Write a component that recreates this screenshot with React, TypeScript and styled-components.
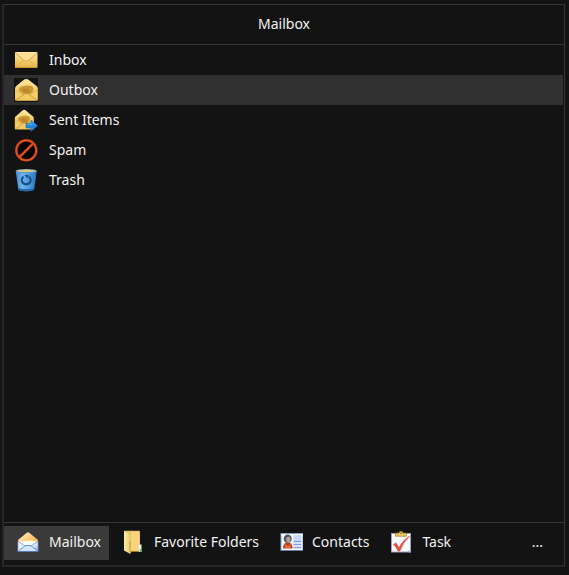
import React, { useState } from "react";
import styled, { createGlobalStyle } from "styled-components";

const GlobalStyle = createGlobalStyle`
  * { box-sizing: border-box; }
  body {
    margin: 0;
    background: #131313;
    color: #f2f2f2;
    font: 14px/20px "Noto Sans", "Open Sans", sans-serif;
  }
  button { font: inherit; color: inherit; border: 0; cursor: default; }
`;

const Page = styled.div`
  display: flex;
  min-height: 100vh;
  padding: 4px 4px 8px 2px;
`;

const Panel = styled.main`
  display: flex;
  flex: 1;
  flex-direction: column;
  min-width: 0;
  border: solid #363636;
  border-width: 1px 1px 2px 2px;
  border-left-color: #262626;
  border-bottom-color: #262626;
`;

const Header = styled.header`
  display: flex;
  align-items: center;
  justify-content: center;
  height: 40px;
  padding-bottom: 2px;
  border-bottom: 1px solid #363636;
`;

const Title = styled.h1`
  margin: 0;
  font-size: 14px;
  font-weight: 400;
  line-height: 20px;
`;

const FolderList = styled.ul`
  flex: 1;
  margin: 0;
  padding: 0 1px 0 0;
  list-style: none;
`;

const FolderButton = styled.button<{ $selected: boolean }>`
  display: flex;
  align-items: center;
  gap: 11px;
  width: 100%;
  height: 30px;
  padding: 0 10px;
  text-align: left;
  background: ${(p) => (p.$selected ? "#303030" : "transparent")};
`;

const IconTile = styled.span`
  display: flex;
  width: 24px;
  height: 24px;
  background: #131313;
`;

const Footer = styled.nav`
  display: flex;
  align-items: center;
  height: 43px;
  padding-bottom: 2px;
  border-top: 1px solid #363636;
`;

const TabButton = styled.button<{ $selected: boolean }>`
  display: flex;
  align-items: center;
  gap: 9px;
  height: 34px;
  padding: 0 8px 2px 12px;
  white-space: nowrap;
  background: ${(p) => (p.$selected ? "#3a3a3a" : "transparent")};
`;

const MoreButton = styled.button`
  height: 34px;
  margin-left: auto;
  padding: 0 21px 2px;
  background: transparent;
`;

const Icon = styled.svg.attrs({ viewBox: "0 0 24 24", "aria-hidden": true })`
  flex: none;
  width: 24px;
  height: 24px;
`;

const Gold = ({ id }: { id: string }) => (
  <defs>
    <linearGradient id={id} x1="0" y1="0" x2="0" y2="1">
      <stop offset="0" stopColor="#ffe9a3" />
      <stop offset="0.55" stopColor="#f3cd68" />
      <stop offset="1" stopColor="#e4b34c" />
    </linearGradient>
  </defs>
);

const InboxIcon = () => (
  <Icon>
    <Gold id="inbox-gold" />
    <rect x="1" y="4" width="22.5" height="16" rx="1" fill="url(#inbox-gold)" />
    <path d="M1.5 19.5 9.5 12M23 19.5 15 12" stroke="#d9ad55" strokeWidth="0.8" />
    <path d="M1.5 5 10 12.4q2.2 1.8 4.5 0L23 5" fill="#fbe093" stroke="#cf9f42" strokeWidth="0.9" />
    <path d="M1.5 19.5h21.5" stroke="#c99735" />
  </Icon>
);

const OpenEnvelope = ({ id }: { id: string }) => (
  <>
    <Gold id={id} />
    <path d="M1 10.5Q1 9 2.2 8L10.2 1.6Q12.2 .2 14.2 1.6L22.6 8Q23.8 9 23.8 10.5V21.5q0 1.3-1.3 1.3H2.3Q1 22.8 1 21.5Z" fill={`url(#${id})`} />
    <path d="M5 10.2q2.5-2.7 5.5-2.2 2-1.5 4.5-.3 3.5-.5 4.5 2.8l-1 3.8-4.5 2.7h-3L5 12.5Z" fill="#cb9838" />
    <path d="M8 10.5h6.5l1.5 3.8-3 1.8-4-2.5Z" fill="#bd8829" />
    <path d="m1.5 12 8 5-8 5M23.3 12l-7.8 5 7.8 5" fill="#f5cf6b" stroke="#d6a848" strokeWidth="0.7" />
    <path d="m2 22.3 8.5-6.2q2-1 4 0l8.5 6.2" fill="#f3ca62" stroke="#cb9b40" strokeWidth="0.8" />
  </>
);

const OutboxIcon = () => (
  <Icon>
    <OpenEnvelope id="outbox-gold" />
  </Icon>
);

const SentIcon = () => (
  <Icon>
    <g transform="translate(0 1) scale(0.83 0.9)">
      <OpenEnvelope id="sent-gold" />
    </g>
    <path d="M12 15.5h5v-3.2l6.5 5.5-6.5 5.5V20h-5Z" fill="#2588dc" stroke="#176bb8" strokeWidth="0.6" />
    <path d="M13 16.5h5V14l4 3.5" fill="none" stroke="#5bb2f4" strokeWidth="0.8" />
  </Icon>
);

const SpamIcon = () => (
  <Icon>
    <circle cx="12.3" cy="12.3" r="10" fill="#000" stroke="#963415" strokeWidth="2.6" />
    <circle cx="12.3" cy="12.3" r="10" fill="none" stroke="#e6501e" strokeWidth="1.7" />
    <path d="M5.5 19.1 19.1 5.5" stroke="#a63813" strokeWidth="2.8" />
    <path d="M5.5 19.1 19.1 5.5" stroke="#e6501e" strokeWidth="1.7" />
  </Icon>
);

const TrashIcon = () => (
  <Icon>
    <defs>
      <linearGradient id="bin-blue">
        <stop offset="0" stopColor="#3d8bcb" />
        <stop offset="0.3" stopColor="#70b4ec" />
        <stop offset="0.65" stopColor="#4799df" />
        <stop offset="1" stopColor="#2b70b6" />
      </linearGradient>
    </defs>
    <path d="M1.7 3 4.5 22q8 2.5 15.5 0L22.8 3Z" fill="url(#bin-blue)" />
    <path d="M4.3 20q8 2.5 16 0l-.3 2q-8 2.5-15.5 0Z" fill="#2464a8" />
    <ellipse cx="12.3" cy="3" rx="10.8" ry="2" fill="#5d9fce" />
    <ellipse cx="12.3" cy="2.8" rx="9.5" ry="1.3" fill="#dcc77c" />
    <path d="M9.5 8.6Q7.6 10 7.8 12.5 8.3 16 12.2 16.2q4-.2 4.5-3.7.1-2.4-1.8-3.9" fill="none" stroke="#174f86" strokeWidth="2" />
    <path d="M10.5 7h4l-1 3.6Z" fill="#174f86" />
  </Icon>
);

const MailboxIcon = () => (
  <Icon>
    <defs>
      <linearGradient id="mail-flap" x1="0" y1="0" x2="0.8" y2="1">
        <stop offset="0" stopColor="#fff3d8" />
        <stop offset="0.5" stopColor="#ffc76c" />
        <stop offset="1" stopColor="#f5a848" />
      </linearGradient>
      <linearGradient id="mail-body" x1="0" y1="0" x2="1" y2="1">
        <stop offset="0" stopColor="#fff" />
        <stop offset="0.6" stopColor="#dceaff" />
        <stop offset="1" stopColor="#779fe0" />
      </linearGradient>
    </defs>
    <path d="M2 10 10.8 2.8q1.2-.9 2.4 0L22 10v11.5H2Z" fill="url(#mail-flap)" />
    <path d="M3.5 11.5 16 10.5l4.5 1-3 4.5H7Z" fill="#f8fbff" />
    <path d="M2 11.5 8.5 15.5h7L22 11.5v10H2Z" fill="url(#mail-body)" stroke="#7f9dd6" strokeWidth="0.8" />
    <path d="m2.5 21 6.5-5.2q3-.8 6 0l6.5 5.2" fill="#d5e5fd" stroke="#6587c8" strokeWidth="0.9" />
    <path d="M2 21.5h20" stroke="#5577bb" />
  </Icon>
);

const FolderIcon = () => (
  <Icon>
    <defs>
      <linearGradient id="folder-front">
        <stop offset="0" stopColor="#fff0a5" />
        <stop offset="1" stopColor="#e7c766" />
      </linearGradient>
    </defs>
    <path d="M3 .8h15q1 0 1 1V21H9L3 18Z" fill="#edc469" />
    <path d="M10 2h8v18.5h-8Z" fill="#f8d47d" />
    <path d="M3 1.2 8 4q1 .5 1 1.5V11l1 2v10l-1 .8-6-3.3Z" fill="url(#folder-front)" />
    <path d="M9 11v12.5M10 21.5h9" stroke="#bd9440" strokeWidth="0.8" />
    <path d="M18 14.5h2.5V22H18Z" fill="#eaf6f1" />
    <path d="M18.8 19h1.7v3h-1.7Z" fill="#4dbb74" />
  </Icon>
);

const ContactsIcon = () => (
  <Icon>
    <rect x="2" y="3.5" width="22" height="17" fill="#f4f8ff" stroke="#819fc9" />
    <rect x="2.5" y="4" width="21" height="2" fill="#fff" />
    <path d="M14.5 5h8v5.5h-8Z" fill="#c8dafa" />
    <path d="M14.5 11.5h8M14.5 14.5h8M14.5 17.5h8" stroke="#7f9fda" strokeWidth="1.4" />
    <path d="M4 18.5q0-6 4-6h1.5q4 0 4 6Z" fill="#bb3f1d" />
    <path d="m6 13.5 3 3 2.5-3V18H6Z" fill="#e56b42" />
    <ellipse cx="8.7" cy="8.8" rx="4" ry="4.3" fill="#55565c" />
    <ellipse cx="9.3" cy="9.6" rx="2.1" ry="2.9" fill="#ada59f" />
    <path d="M2 20.5h22" stroke="#627ea8" />
  </Icon>
);

const TaskIcon = () => (
  <Icon>
    <rect x="2.5" y="3.5" width="19" height="18.5" fill="#f9fbff" stroke="#94a3c9" />
    <path d="M19 20.5h3v1.8h-3Z" fill="#a9b8da" />
    <path d="M6.5 3.2H10Q10 1.4 12 1.4t2 1.8h3.5v3h-11Z" fill="#eccc62" stroke="#ae8126" strokeWidth="0.8" />
    <circle cx="12" cy="3.2" r="0.8" fill="#78571c" />
    <path d="M4.5 14.5 7 12.8l3 4.7Q14.5 9 21 6q-7 6-10 15H9Q7 16.8 4.5 14.5Z" fill="#e6503d" stroke="#d94b3a" strokeWidth="0.5" />
  </Icon>
);

const folders = [
  { name: "Inbox", Glyph: InboxIcon },
  { name: "Outbox", Glyph: OutboxIcon },
  { name: "Sent Items", Glyph: SentIcon },
  { name: "Spam", Glyph: SpamIcon },
  { name: "Trash", Glyph: TrashIcon },
];

const tabs = [
  { name: "Mailbox", Glyph: MailboxIcon },
  { name: "Favorite Folders", Glyph: FolderIcon },
  { name: "Contacts", Glyph: ContactsIcon },
  { name: "Task", Glyph: TaskIcon },
];

export default function App() {
  const [folder, setFolder] = useState("Outbox");
  const [tab, setTab] = useState("Mailbox");

  return (
    <Page>
      <GlobalStyle />
      <Panel>
        <Header>
          <Title>{tab}</Title>
        </Header>
        <FolderList>
          {folders.map(({ name, Glyph }) => (
            <li key={name}>
              <FolderButton $selected={name === folder} onClick={() => setFolder(name)}>
                <IconTile>
                  <Glyph />
                </IconTile>
                {name}
              </FolderButton>
            </li>
          ))}
        </FolderList>
        <Footer>
          {tabs.map(({ name, Glyph }) => (
            <TabButton key={name} $selected={name === tab} onClick={() => setTab(name)}>
              <Glyph />
              {name}
            </TabButton>
          ))}
          <MoreButton aria-label="More">...</MoreButton>
        </Footer>
      </Panel>
    </Page>
  );
}
